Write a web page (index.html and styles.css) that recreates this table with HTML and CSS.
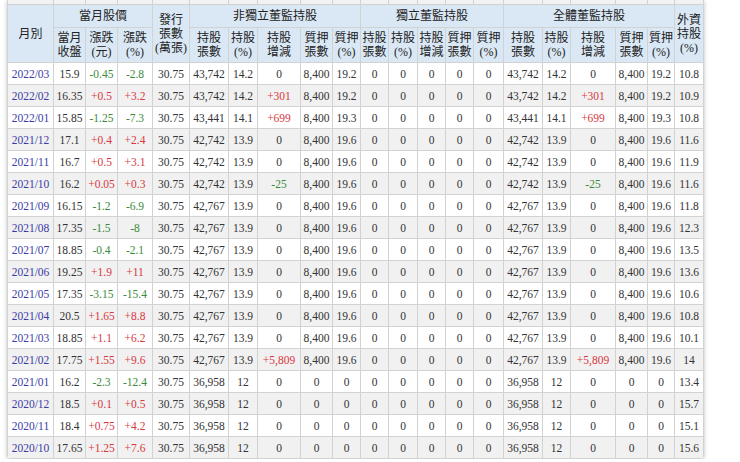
FILE: index.html
```html
<!DOCTYPE html>
<html lang="zh-Hant">
<head>
<meta charset="utf-8">
<title>董監持股</title>
<link rel="stylesheet" href="styles.css">
</head>
<body>
<div class="page">
<div class="card">
<table class="grid">
<colgroup>
<col class="w46"><col class="w32"><col class="w32"><col class="w35"><col class="w37">
<col class="w39"><col class="w29"><col class="w43"><col class="w32"><col class="w28">
<col class="w28"><col class="w29"><col class="w28"><col class="w28"><col class="w30">
<col class="w39"><col class="w28"><col class="w45"><col class="w32"><col class="w27">
<col class="w29">
</colgroup>
<thead>
<tr class="strip"><td></td><td></td><td></td><td></td><td></td><td></td><td></td><td></td><td></td><td></td><td></td><td></td><td></td><td></td><td></td><td></td><td></td><td></td><td></td><td></td><td></td></tr>
<tr class="h1">
<th rowspan="2">月別</th>
<th colspan="3">當月股價</th>
<th rowspan="2">發行<br>張數<br>(萬張)</th>
<th colspan="5">非獨立董監持股</th>
<th colspan="5">獨立董監持股</th>
<th colspan="5">全體董監持股</th>
<th rowspan="2">外資<br>持股<br>(%)</th>
</tr>
<tr class="h2">
<th>當月<br>收盤</th><th>漲跌<br>(元)</th><th>漲跌<br>(%)</th>
<th>持股<br>張數</th><th>持股<br>(%)</th><th>持股<br>增減</th><th>質押<br>張數</th><th>質押<br>(%)</th>
<th>持股<br>張數</th><th>持股<br>(%)</th><th>持股<br>增減</th><th>質押<br>張數</th><th>質押<br>(%)</th>
<th>持股<br>張數</th><th>持股<br>(%)</th><th>持股<br>增減</th><th>質押<br>張數</th><th>質押<br>(%)</th>
</tr>
</thead>
<tbody>
<tr><td class="m">2022/03</td><td>15.9</td><td class="dn">-0.45</td><td class="dn">-2.8</td><td>30.75</td><td>43,742</td><td>14.2</td><td>0</td><td>8,400</td><td>19.2</td><td>0</td><td>0</td><td>0</td><td>0</td><td>0</td><td>43,742</td><td>14.2</td><td>0</td><td>8,400</td><td>19.2</td><td>10.8</td></tr>
<tr><td class="m">2022/02</td><td>16.35</td><td class="up">+0.5</td><td class="up">+3.2</td><td>30.75</td><td>43,742</td><td>14.2</td><td class="up">+301</td><td>8,400</td><td>19.2</td><td>0</td><td>0</td><td>0</td><td>0</td><td>0</td><td>43,742</td><td>14.2</td><td class="up">+301</td><td>8,400</td><td>19.2</td><td>10.9</td></tr>
<tr><td class="m">2022/01</td><td>15.85</td><td class="dn">-1.25</td><td class="dn">-7.3</td><td>30.75</td><td>43,441</td><td>14.1</td><td class="up">+699</td><td>8,400</td><td>19.3</td><td>0</td><td>0</td><td>0</td><td>0</td><td>0</td><td>43,441</td><td>14.1</td><td class="up">+699</td><td>8,400</td><td>19.3</td><td>10.8</td></tr>
<tr><td class="m">2021/12</td><td>17.1</td><td class="up">+0.4</td><td class="up">+2.4</td><td>30.75</td><td>42,742</td><td>13.9</td><td>0</td><td>8,400</td><td>19.6</td><td>0</td><td>0</td><td>0</td><td>0</td><td>0</td><td>42,742</td><td>13.9</td><td>0</td><td>8,400</td><td>19.6</td><td>11.6</td></tr>
<tr><td class="m">2021/11</td><td>16.7</td><td class="up">+0.5</td><td class="up">+3.1</td><td>30.75</td><td>42,742</td><td>13.9</td><td>0</td><td>8,400</td><td>19.6</td><td>0</td><td>0</td><td>0</td><td>0</td><td>0</td><td>42,742</td><td>13.9</td><td>0</td><td>8,400</td><td>19.6</td><td>11.9</td></tr>
<tr><td class="m">2021/10</td><td>16.2</td><td class="up">+0.05</td><td class="up">+0.3</td><td>30.75</td><td>42,742</td><td>13.9</td><td class="dn">-25</td><td>8,400</td><td>19.6</td><td>0</td><td>0</td><td>0</td><td>0</td><td>0</td><td>42,742</td><td>13.9</td><td class="dn">-25</td><td>8,400</td><td>19.6</td><td>11.6</td></tr>
<tr><td class="m">2021/09</td><td>16.15</td><td class="dn">-1.2</td><td class="dn">-6.9</td><td>30.75</td><td>42,767</td><td>13.9</td><td>0</td><td>8,400</td><td>19.6</td><td>0</td><td>0</td><td>0</td><td>0</td><td>0</td><td>42,767</td><td>13.9</td><td>0</td><td>8,400</td><td>19.6</td><td>11.8</td></tr>
<tr><td class="m">2021/08</td><td>17.35</td><td class="dn">-1.5</td><td class="dn">-8</td><td>30.75</td><td>42,767</td><td>13.9</td><td>0</td><td>8,400</td><td>19.6</td><td>0</td><td>0</td><td>0</td><td>0</td><td>0</td><td>42,767</td><td>13.9</td><td>0</td><td>8,400</td><td>19.6</td><td>12.3</td></tr>
<tr><td class="m">2021/07</td><td>18.85</td><td class="dn">-0.4</td><td class="dn">-2.1</td><td>30.75</td><td>42,767</td><td>13.9</td><td>0</td><td>8,400</td><td>19.6</td><td>0</td><td>0</td><td>0</td><td>0</td><td>0</td><td>42,767</td><td>13.9</td><td>0</td><td>8,400</td><td>19.6</td><td>13.5</td></tr>
<tr><td class="m">2021/06</td><td>19.25</td><td class="up">+1.9</td><td class="up">+11</td><td>30.75</td><td>42,767</td><td>13.9</td><td>0</td><td>8,400</td><td>19.6</td><td>0</td><td>0</td><td>0</td><td>0</td><td>0</td><td>42,767</td><td>13.9</td><td>0</td><td>8,400</td><td>19.6</td><td>13.6</td></tr>
<tr><td class="m">2021/05</td><td>17.35</td><td class="dn">-3.15</td><td class="dn">-15.4</td><td>30.75</td><td>42,767</td><td>13.9</td><td>0</td><td>8,400</td><td>19.6</td><td>0</td><td>0</td><td>0</td><td>0</td><td>0</td><td>42,767</td><td>13.9</td><td>0</td><td>8,400</td><td>19.6</td><td>10.6</td></tr>
<tr><td class="m">2021/04</td><td>20.5</td><td class="up">+1.65</td><td class="up">+8.8</td><td>30.75</td><td>42,767</td><td>13.9</td><td>0</td><td>8,400</td><td>19.6</td><td>0</td><td>0</td><td>0</td><td>0</td><td>0</td><td>42,767</td><td>13.9</td><td>0</td><td>8,400</td><td>19.6</td><td>10.8</td></tr>
<tr><td class="m">2021/03</td><td>18.85</td><td class="up">+1.1</td><td class="up">+6.2</td><td>30.75</td><td>42,767</td><td>13.9</td><td>0</td><td>8,400</td><td>19.6</td><td>0</td><td>0</td><td>0</td><td>0</td><td>0</td><td>42,767</td><td>13.9</td><td>0</td><td>8,400</td><td>19.6</td><td>10.1</td></tr>
<tr><td class="m">2021/02</td><td>17.75</td><td class="up">+1.55</td><td class="up">+9.6</td><td>30.75</td><td>42,767</td><td>13.9</td><td class="up">+5,809</td><td>8,400</td><td>19.6</td><td>0</td><td>0</td><td>0</td><td>0</td><td>0</td><td>42,767</td><td>13.9</td><td class="up">+5,809</td><td>8,400</td><td>19.6</td><td>14</td></tr>
<tr><td class="m">2021/01</td><td>16.2</td><td class="dn">-2.3</td><td class="dn">-12.4</td><td>30.75</td><td>36,958</td><td>12</td><td>0</td><td>0</td><td>0</td><td>0</td><td>0</td><td>0</td><td>0</td><td>0</td><td>36,958</td><td>12</td><td>0</td><td>0</td><td>0</td><td>13.4</td></tr>
<tr><td class="m">2020/12</td><td>18.5</td><td class="up">+0.1</td><td class="up">+0.5</td><td>30.75</td><td>36,958</td><td>12</td><td>0</td><td>0</td><td>0</td><td>0</td><td>0</td><td>0</td><td>0</td><td>0</td><td>36,958</td><td>12</td><td>0</td><td>0</td><td>0</td><td>15.7</td></tr>
<tr><td class="m">2020/11</td><td>18.4</td><td class="up">+0.75</td><td class="up">+4.2</td><td>30.75</td><td>36,958</td><td>12</td><td>0</td><td>0</td><td>0</td><td>0</td><td>0</td><td>0</td><td>0</td><td>0</td><td>36,958</td><td>12</td><td>0</td><td>0</td><td>0</td><td>15.1</td></tr>
<tr><td class="m">2020/10</td><td>17.65</td><td class="up">+1.25</td><td class="up">+7.6</td><td>30.75</td><td>36,958</td><td>12</td><td>0</td><td>0</td><td>0</td><td>0</td><td>0</td><td>0</td><td>0</td><td>0</td><td>36,958</td><td>12</td><td>0</td><td>0</td><td>0</td><td>15.6</td></tr>
</tbody>
</table>
</div>
</div>
</body>
</html>
```
FILE: styles.css
```css
html, body {
  margin: 0;
  padding: 0;
  background: #ffffff;
}
.page {
  padding: 0 0 0 7px;
}
.card {
  width: 697px;
  background: #ffffff;
  box-shadow: 0 1px 4px rgba(0, 0, 0, 0.25);
  border-radius: 0 0 4px 4px;
  overflow: hidden;
}
.grid {
  border-collapse: collapse;
  table-layout: fixed;
  width: 697px;
  font-family: "Liberation Serif", "Noto Sans CJK TC", serif;
  font-size: 11.5px;
  color: #333333;
}
.w46 { width: 46px; }
.w45 { width: 45px; }
.w43 { width: 43px; }
.w39 { width: 39px; }
.w37 { width: 37px; }
.w35 { width: 35px; }
.w32 { width: 32px; }
.w30 { width: 30px; }
.w29 { width: 29px; }
.w28 { width: 28px; }
.w27 { width: 27px; }
.grid td, .grid th {
  border: 1px solid #d2d2d2;
  padding: 0;
  text-align: center;
  vertical-align: middle;
  white-space: nowrap;
  overflow: hidden;
}
.grid tr.strip td {
  height: 4px;
  background: #f2f2f2;
  border-top: none;
}
.grid th {
  background: #dae8f5;
  font-family: "Liberation Serif", "Noto Sans CJK TC", serif;
  font-weight: normal;
  font-size: 12px;
  line-height: 14px;
  color: #222222;
}
.grid tr.h1 th {
  height: 22px;
}
.grid tr.h2 th {
  height: 34px;
}
.grid tbody tr {
  height: 22px;
}
.grid tbody tr:nth-child(even) td {
  background: #f1f1f1;
}
.grid td.m {
  color: #3b3ba5;
}
.grid td.up {
  color: #d8383f;
}
.grid td.dn {
  color: #3b8a3b;
}
```
